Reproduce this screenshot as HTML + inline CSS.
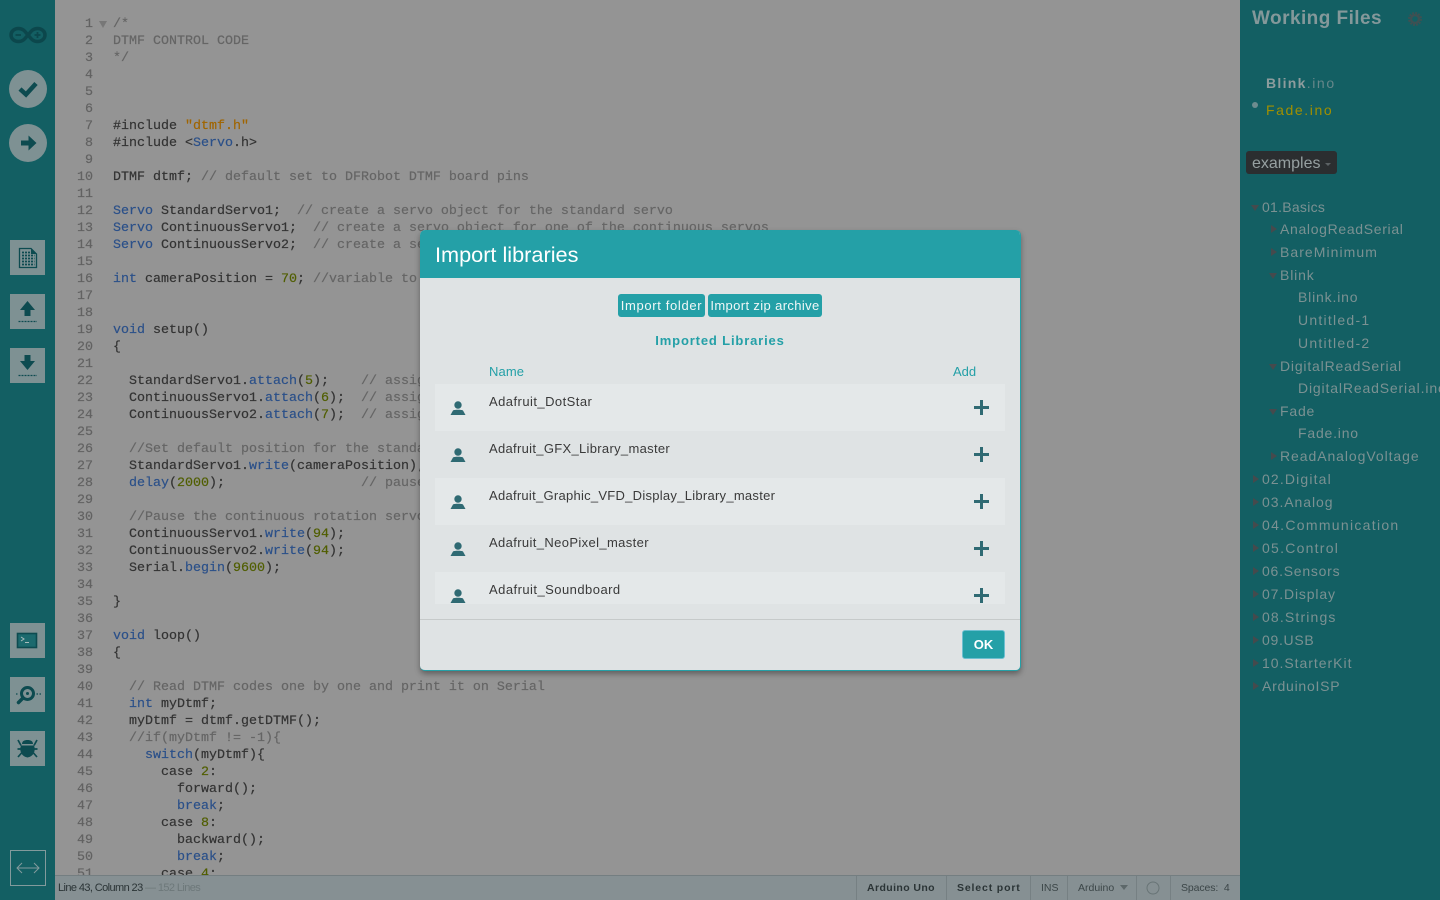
<!DOCTYPE html>
<html><head><meta charset="utf-8"><title>Import libraries</title>
<style>
*{box-sizing:border-box}
html,body{margin:0;padding:0;width:1440px;height:900px;overflow:hidden;background:#949494;font-family:"Liberation Sans",sans-serif}
#left{position:absolute;left:0;top:0;width:55px;height:900px;background:#135f63}
#right{position:absolute;left:1240px;top:0;width:200px;height:900px;background:#135f63;overflow:hidden}
#nums,#code{position:absolute;top:16px;margin:0;font:13.333px/17px "Liberation Mono",monospace;height:859px;overflow:hidden;-webkit-text-stroke:.2px}
#nums{left:60px;width:33px;text-align:right;color:#626262}
#code{left:113px;width:1120px;color:#333}
#code i{font-style:normal;color:#656565}
#code b{font-weight:normal;color:#2b5089}
#code u{text-decoration:none;color:#a06500}
#code s{text-decoration:none;color:#505e00}
#status{position:absolute;left:55px;top:875px;width:1185px;height:25px;background:#869093;border-top:1px solid #747e81;font-size:10.5px;line-height:24px;color:#2b3436}
#status span{position:absolute;top:0;white-space:nowrap}
#status .sep{width:1px;height:24px;background:#768083}
#right div{position:absolute;white-space:nowrap;font-size:14px;letter-spacing:1.05px;color:#7b9192;line-height:18px}
#right .tri{width:0;height:0}
.r{border-left:6px solid #454a4d;border-top:4px solid transparent;border-bottom:4px solid transparent}
.d{border-top:6px solid #454a4d;border-left:4px solid transparent;border-right:4px solid transparent}
#modal{position:absolute;left:420px;top:230px;width:601px;height:441px;background:#dfe3e4;border-radius:5px;border:1px solid #24a0a7;border-top:0;border-left:0;box-shadow:0 3px 6px rgba(0,0,0,.35);overflow:hidden}
#mh{position:absolute;left:0;top:0;width:600px;height:48px;background:#24a0a7;color:#fff;font-size:21.7px;line-height:49px;padding-left:15px}
.btn{position:absolute;top:64px;height:23px;background:#24a0a7;color:#f0f7f7;border-radius:3px;font-size:13px;line-height:23px;text-align:center}
#list{position:absolute;left:15px;top:154px;width:570px;height:220px;overflow:hidden}
.row{position:absolute;left:0;width:570px;height:47px;color:#3a3a3a;font-size:13px}
.row span{position:absolute;left:54px;top:10px}
.row svg{position:absolute}
.l{background:#e4e8e9}
</style></head><body>
<pre id="nums">1
2
3
4
5
6
7
8
9
10
11
12
13
14
15
16
17
18
19
20
21
22
23
24
25
26
27
28
29
30
31
32
33
34
35
36
37
38
39
40
41
42
43
44
45
46
47
48
49
50
51</pre>
<svg style="position:absolute;left:99px;top:21px" width="8" height="8"><path d="M0 0H8L4 7Z" fill="#777"/></svg>
<pre id="code"><i>/*
DTMF CONTROL CODE
*/</i>



#include <u>"dtmf.h"</u>
#include &lt;<b>Servo</b>.h&gt;

DTMF dtmf; <i>// default set to DFRobot DTMF board pins</i>

<b>Servo</b> StandardServo1;  <i>// create a servo object for the standard servo</i>
<b>Servo</b> ContinuousServo1;  <i>// create a servo object for one of the continuous servos</i>
<b>Servo</b> ContinuousServo2;  <i>// create a servo object for the other continuous servo</i>

<b>int</b> cameraPosition = <s>70</s>; <i>//variable to store the camera position</i>


<b>void</b> setup()
{

  StandardServo1.<b>attach</b>(<s>5</s>);    <i>// assign standard servo</i>
  ContinuousServo1.<b>attach</b>(<s>6</s>);  <i>// assign continuous servo</i>
  ContinuousServo2.<b>attach</b>(<s>7</s>);  <i>// assign continuous servo</i>

  <i>//Set default position for the standard servo</i>
  StandardServo1.<b>write</b>(cameraPosition);
  <b>delay</b>(<s>2000</s>);                 <i>// pause for the servo</i>

  <i>//Pause the continuous rotation servos</i>
  ContinuousServo1.<b>write</b>(<s>94</s>);
  ContinuousServo2.<b>write</b>(<s>94</s>);
  Serial.<b>begin</b>(<s>9600</s>);

}

<b>void</b> loop()
{

  <i>// Read DTMF codes one by one and print it on Serial</i>
  <b>int</b> myDtmf;
  myDtmf = dtmf.getDTMF();
  <i>//if(myDtmf != -1){</i>
    <b>switch</b>(myDtmf){
      case <s>2</s>:
        forward();
        <b>break</b>;
      case <s>8</s>:
        backward();
        <b>break</b>;
      case <s>4</s>:</pre>

<div id="status">
<span style="left:3px;letter-spacing:-.6px;color:#2b3436;font-size:11px">Line 43, Column 23</span>
<span style="left:90px;color:#6d787a;letter-spacing:-.6px;font-size:11px">— 152 Lines</span>
<span class="sep" style="left:801px"></span>
<span style="left:812px;font-weight:bold;letter-spacing:.4px">Arduino Uno</span>
<span class="sep" style="left:891px"></span>
<span style="left:902px;font-weight:bold;letter-spacing:.85px">Select port</span>
<span class="sep" style="left:975px"></span>
<span style="left:986px;color:#3c4648">INS</span>
<span class="sep" style="left:1012px"></span>
<span style="left:1023px;color:#3c4648">Arduino</span>
<svg style="position:absolute;left:1065px;top:9px" width="8" height="6"><path d="M0 0H8L4 5Z" fill="#5d686a"/></svg>
<span class="sep" style="left:1081px"></span>
<svg style="position:absolute;left:1091px;top:5px" width="14" height="14"><circle cx="7" cy="7" r="6" fill="none" stroke="#687476"/></svg>
<span class="sep" style="left:1115px"></span>
<span style="left:1126px;color:#3c4648;letter-spacing:-.1px">Spaces:&nbsp; 4</span>
</div>

<div id="left">
<svg style="position:absolute;left:9px;top:26px" width="38" height="18" viewBox="0 0 38 18"><path d="M9.500 2.500C15 2.500 17 7 19 9C21 11 23 15.500 28.500 15.500C33 15.500 36 12.500 36 9C36 5.500 33 2.500 28.500 2.500C23 2.500 21 7 19 9C17 11 15 15.500 9.500 15.500C5 15.500 2 12.500 2 9C2 5.500 5 2.500 9.500 2.500Z" fill="none" stroke="#0c474c" stroke-width="3.500"/><path d="M6.500 9H12M25.500 9H31.500M28.500 6V12" stroke="#0c474c" stroke-width="1.800" fill="none"/></svg>
<svg style="position:absolute;left:9px;top:70px" width="38" height="38"><circle cx="19" cy="19" r="19" fill="#7e9193"/><path d="M11 19L17 24.500L27 13.500" fill="none" stroke="#0d4b50" stroke-width="4.500"/></svg>
<svg style="position:absolute;left:9px;top:124px" width="38" height="38"><circle cx="19" cy="19" r="19" fill="#7e9193"/><path d="M12 16.500H19.500V11.500L27.500 19L19.500 26.500V21.500H12Z" fill="#0d4b50"/></svg>

<svg style="position:absolute;left:10px;top:240px" width="35" height="35"><rect width="35" height="35" fill="#7e9193"/><path d="M9.500 8.500H21L26.500 14V27.500H9.500Z" fill="none" stroke="#0d4b50" stroke-width="1.300"/><path d="M21 8L27 14H21Z" fill="#0d4b50"/><path d="M12 12.500H20M12 15.500H24.500M12 18.500H24.500M12 21.500H24.500M12 24.500H24.500" stroke="#0d4b50" stroke-width="1.800" stroke-dasharray="2 1"/></svg>
<svg style="position:absolute;left:10px;top:294px" width="35" height="35"><rect width="35" height="35" fill="#7e9193"/><path d="M17.500 7L25 16H20.500V22H14.500V16H10Z" fill="#0d4b50"/><path d="M8.500 27.500H27" stroke="#0d4b50" stroke-dasharray="2 1" stroke-width="1.200"/></svg>
<svg style="position:absolute;left:10px;top:348px" width="35" height="35"><rect width="35" height="35" fill="#7e9193"/><path d="M17.500 22L25 13H20.500V7H14.500V13H10Z" fill="#0d4b50"/><path d="M8.500 27.500H27" stroke="#0d4b50" stroke-dasharray="2 1" stroke-width="1.200"/></svg>

<svg style="position:absolute;left:10px;top:623px" width="35" height="35"><rect width="35" height="35" fill="#7e9193"/><rect x="7.500" y="10.500" width="19" height="14" fill="#1c6a6e" stroke="#0d4b50" stroke-width="1.600"/><path d="M11 14L14 16L11 18M15 19.500H19" fill="none" stroke="#a8bcbc" stroke-width="1"/></svg>
<svg style="position:absolute;left:10px;top:677px" width="35" height="35"><rect width="35" height="35" fill="#7e9193"/><circle cx="17.500" cy="16.500" r="6" fill="none" stroke="#0d4b50" stroke-width="3"/><circle cx="17.500" cy="16.500" r="1.500" fill="#0d4b50"/><path d="M13 21L8.500 25.500" stroke="#0d4b50" stroke-width="3.500" stroke-linecap="round"/><path d="M6 17H8M26.500 17H32" stroke="#0d4b50" stroke-dasharray="1.500 1.500" stroke-width="1.300"/></svg>
<svg style="position:absolute;left:10px;top:731px" width="35" height="35"><rect width="35" height="35" fill="#7e9193"/><path d="M12 13C12 10 14.500 9 17.500 9C20.500 9 23 10 23 13Z" fill="#0d4b50"/><path d="M11 14.500H24C25.500 18 25 25 17.500 26.500C10 25 9.500 18 11 14.500Z" fill="#0d4b50"/><path d="M8 9L11 14.500M27 9L24 14.500M7.500 18H11M27.500 18H24M8 26L11.500 22M27 26L23.500 22" stroke="#0d4b50" stroke-width="1.700" fill="none"/></svg>

<svg style="position:absolute;left:10px;top:850px" width="36" height="36"><rect x=".5" y=".5" width="35" height="35" fill="none" stroke="#829a9c"/><path d="M7 18H29M12 13L7 18L12 23M24 13L29 18L24 23" fill="none" stroke="#829a9c" stroke-width="1"/></svg>
</div>

<div id="right">
<div style="left:12px;top:7px;font-size:19px;line-height:24px;font-weight:bold;letter-spacing:.45px;color:#84989a">Working Files</div>
<svg style="position:absolute;left:168px;top:12px" width="14" height="14" viewBox="0 0 14 14"><circle cx="7" cy="7" r="4" fill="none" stroke="#3d5153" stroke-width="2.500"/><circle cx="7" cy="7" r="6" fill="none" stroke="#3d5153" stroke-width="2" stroke-dasharray="2 1.140"/></svg>
<div style="left:26px;top:74px;letter-spacing:1.3px;color:#8d9c9d;font-weight:bold">Blink<span style="font-weight:normal;color:#66878a;letter-spacing:1.6px">.ino</span></div>
<svg style="position:absolute;left:12px;top:102px" width="7" height="7"><circle cx="3" cy="3" r="3" fill="#6d8c8f"/></svg>
<div style="left:26px;top:101px;letter-spacing:1.6px;color:#a18f00">Fade.ino</div>
<div style="left:6px;top:151px;width:91px;height:23px;background:#2b2e30;border-radius:3px"></div>
<div style="left:12px;top:155px;font-size:16px;letter-spacing:0;color:#96a0a1">examples</div>
<div class="tri" style="left:85px;top:163px;border-top:3px solid #5c6264;border-left:3px solid transparent;border-right:3px solid transparent"></div>

<div class="tri d" style="left:11px;top:205px"></div><div style="left:22px;top:198px;letter-spacing:.27px">01.Basics</div>
<div class="tri r" style="left:31px;top:225px"></div><div style="left:40px;top:220px;letter-spacing:.67px">AnalogReadSerial</div>
<div class="tri r" style="left:31px;top:248px"></div><div style="left:40px;top:243px">BareMinimum</div>
<div class="tri d" style="left:29px;top:273px"></div><div style="left:40px;top:266px;letter-spacing:.85px">Blink</div>
<div style="left:58px;top:288px;letter-spacing:.83px">Blink.ino</div>
<div style="left:58px;top:311px;letter-spacing:1.25px">Untitled-1</div>
<div style="left:58px;top:334px;letter-spacing:1.25px">Untitled-2</div>
<div class="tri d" style="left:29px;top:364px"></div><div style="left:40px;top:357px;letter-spacing:.81px">DigitalReadSerial</div>
<div style="left:58px;top:379px;letter-spacing:.85px">DigitalReadSerial.ino</div>
<div class="tri d" style="left:29px;top:409px"></div><div style="left:40px;top:402px;letter-spacing:.8px">Fade</div>
<div style="left:58px;top:424px;letter-spacing:.8px">Fade.ino</div>
<div class="tri r" style="left:31px;top:452px"></div><div style="left:40px;top:447px;letter-spacing:.93px">ReadAnalogVoltage</div>
<div class="tri r" style="left:13px;top:475px"></div><div style="left:22px;top:470px;letter-spacing:1.15px">02.Digital</div>
<div class="tri r" style="left:13px;top:498px"></div><div style="left:22px;top:493px;letter-spacing:.94px">03.Analog</div>
<div class="tri r" style="left:13px;top:521px"></div><div style="left:22px;top:516px;letter-spacing:1.3px">04.Communication</div>
<div class="tri r" style="left:13px;top:544px"></div><div style="left:22px;top:539px;letter-spacing:1.25px">05.Control</div>
<div class="tri r" style="left:13px;top:567px"></div><div style="left:22px;top:562px;letter-spacing:.75px">06.Sensors</div>
<div class="tri r" style="left:13px;top:590px"></div><div style="left:22px;top:585px;letter-spacing:.85px">07.Display</div>
<div class="tri r" style="left:13px;top:613px"></div><div style="left:22px;top:608px;letter-spacing:1.15px">08.Strings</div>
<div class="tri r" style="left:13px;top:636px"></div><div style="left:22px;top:631px;letter-spacing:.7px">09.USB</div>
<div class="tri r" style="left:13px;top:659px"></div><div style="left:22px;top:654px;letter-spacing:.97px">10.StarterKit</div>
<div class="tri r" style="left:13px;top:682px"></div><div style="left:22px;top:677px;letter-spacing:.75px">ArduinoISP</div>
</div>

<div id="modal">
<div id="mh">Import libraries</div>
<div class="btn" style="left:198px;width:87px;letter-spacing:.65px">Import folder</div>
<div class="btn" style="left:288px;width:114px;letter-spacing:.37px">Import zip archive</div>
<div style="position:absolute;left:0;top:103px;width:600px;text-align:center;color:#24a0a7;font-size:13px;font-weight:bold;letter-spacing:.85px">Imported Libraries</div>
<div style="position:absolute;left:69px;top:134px;color:#24a0a7;font-size:13px;letter-spacing:.1px">Name</div>
<div style="position:absolute;left:533px;top:134px;color:#24a0a7;font-size:13px">Add</div>
<div id="list">
<div class="row l" style="top:0"><span style="letter-spacing:.45px">Adafruit_DotStar</span><svg style="left:15px;top:16px" width="16" height="16"><circle cx="8" cy="5" r="3.700" fill="#2f6a73"/><path d="M.5 15L3 10.500C4 9.500 12 9.500 13 10.500L15.500 15Z" fill="#2f6a73"/></svg><svg style="left:539px;top:16px" width="15" height="15"><path d="M7.500 0V15M0 7.500H15" stroke="#2f6a73" stroke-width="3"/></svg></div>
<div class="row" style="top:47px"><span style="letter-spacing:.31px">Adafruit_GFX_Library_master</span><svg style="left:15px;top:16px" width="16" height="16"><circle cx="8" cy="5" r="3.700" fill="#2f6a73"/><path d="M.5 15L3 10.500C4 9.500 12 9.500 13 10.500L15.500 15Z" fill="#2f6a73"/></svg><svg style="left:539px;top:16px" width="15" height="15"><path d="M7.500 0V15M0 7.500H15" stroke="#2f6a73" stroke-width="3"/></svg></div>
<div class="row l" style="top:94px"><span style="letter-spacing:.27px">Adafruit_Graphic_VFD_Display_Library_master</span><svg style="left:15px;top:16px" width="16" height="16"><circle cx="8" cy="5" r="3.700" fill="#2f6a73"/><path d="M.5 15L3 10.500C4 9.500 12 9.500 13 10.500L15.500 15Z" fill="#2f6a73"/></svg><svg style="left:539px;top:16px" width="15" height="15"><path d="M7.500 0V15M0 7.500H15" stroke="#2f6a73" stroke-width="3"/></svg></div>
<div class="row" style="top:141px"><span style="letter-spacing:.37px">Adafruit_NeoPixel_master</span><svg style="left:15px;top:16px" width="16" height="16"><circle cx="8" cy="5" r="3.700" fill="#2f6a73"/><path d="M.5 15L3 10.500C4 9.500 12 9.500 13 10.500L15.500 15Z" fill="#2f6a73"/></svg><svg style="left:539px;top:16px" width="15" height="15"><path d="M7.500 0V15M0 7.500H15" stroke="#2f6a73" stroke-width="3"/></svg></div>
<div class="row l" style="top:188px"><span style="letter-spacing:.46px">Adafruit_Soundboard</span><svg style="left:15px;top:16px" width="16" height="16"><circle cx="8" cy="5" r="3.700" fill="#2f6a73"/><path d="M.5 15L3 10.500C4 9.500 12 9.500 13 10.500L15.500 15Z" fill="#2f6a73"/></svg><svg style="left:539px;top:16px" width="15" height="15"><path d="M7.500 0V15M0 7.500H15" stroke="#2f6a73" stroke-width="3"/></svg></div>
</div>
<div style="position:absolute;left:0;top:389px;width:600px;height:1px;background:#c6caca"></div>
<div style="position:absolute;left:542px;top:400px;width:43px;height:29px;background:#24a0a7;border:1px solid #6dbfd0;border-radius:3px;color:#fff;font-size:13px;font-weight:bold;text-align:center;line-height:27px">OK</div>
</div>
</body></html>
